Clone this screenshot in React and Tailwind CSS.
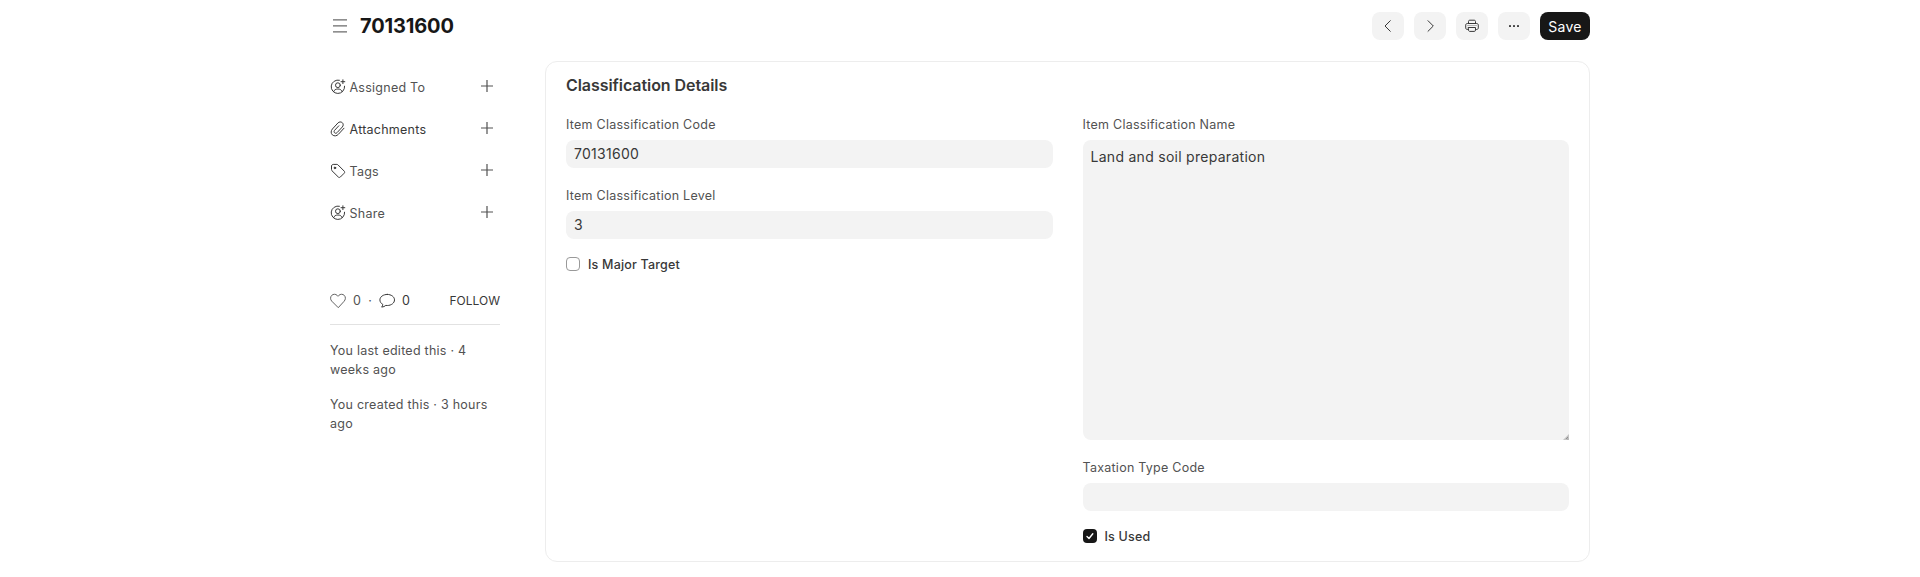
import React from "react";

const stroke = {
  fill: "none",
  stroke: "currentColor",
  strokeLinecap: "round",
  strokeLinejoin: "round",
};

function Menu() {
  return (
    <svg className="h-5 w-5" viewBox="0 0 20 20" stroke="#6b6b6b" strokeWidth="1.200">
      <path d="M3 3.800h14M3 9.800h14M3 15.800h14" />
    </svg>
  );
}

function UserPlus() {
  return (
    <svg className="h-4 w-4" viewBox="0 0 16 16" {...stroke}>
      <path d="M9.4 1.200A6.700 6.700 0 1 0 14.600 7.200" />
      <circle cx="7.900" cy="6.200" r="2.400" />
      <path d="M3.500 12.700c.7-1.800 2.200-2.700 4.400-2.700s3.700.9 4.400 2.700M12.900.8v3.800M11 2.700h3.800" />
    </svg>
  );
}

function Clip() {
  return (
    <svg className="h-4 w-4" viewBox="0 0 16 16" {...stroke}>
      <path d="M14 7.200l-5.600 6.100c-1.600 1.800-4.300 2.100-6 .6s-1.600-4.100 0-5.900l5.500-6c1.200-1.300 3.200-1.400 4.400-.3s1.200 3 0 4.300l-5.200 5.600c-.7.8-1.800.9-2.500.2s-.7-1.700 0-2.500l4.200-4.500" />
    </svg>
  );
}

function Tag() {
  return (
    <svg className="h-4 w-4" viewBox="0 0 16 16" {...stroke}>
      <path d="M1.500 3.200v3.400c0 .5.200.9.500 1.200l6.300 6.200c.6.600 1.500.6 2.100 0l3.800-3.800c.6-.6.6-1.500 0-2.100L8 1.900c-.3-.3-.7-.5-1.100-.5H3.200c-.9 0-1.700.8-1.700 1.800z" />
      <circle cx="4.900" cy="4.900" r=".8" fill="currentColor" />
    </svg>
  );
}

function Plus() {
  return (
    <svg className="mb-1 h-3 w-3 text-[#525252]" viewBox="0 0 12 12" {...stroke} strokeLinecap="butt" strokeWidth="1.200">
      <path d="M6 0v12M0 6h12" />
    </svg>
  );
}

function Heart() {
  return (
    <svg className="h-4 w-4" viewBox="0 0 16 16" {...stroke} strokeWidth=".9">
      <path d="M8 14.400L1.800 8.200C.2 6.600.2 3.900 1.700 2.400s4-1.500 5.500 0L8 3.300l.8-.9c1.500-1.500 4-1.500 5.500 0s1.500 4.200-.1 5.800z" />
    </svg>
  );
}

function Comment() {
  return (
    <svg className="h-4 w-4" viewBox="0 0 16 16" {...stroke}>
      <path d="M8.300 1.400C4.200 1.400.9 3.800.9 6.900c0 1.900 1.100 3.500 2.900 4.500-.1 1-.5 1.900-1.100 2.700 1.600-.1 3-.7 4.100-1.700.5.1.9.1 1.500.1 4 0 7.200-2.500 7.200-5.600s-3.200-5.500-7.200-5.500z" />
    </svg>
  );
}

function ChevronLeft() {
  return (
    <svg className="h-4 w-4" viewBox="0 0 16 16" {...stroke}>
      <path d="M10.300 2.700L5 8l5.300 5.300" />
    </svg>
  );
}

function ChevronRight() {
  return (
    <svg className="h-4 w-4" viewBox="0 0 16 16" {...stroke}>
      <path d="M6 2.700l5.300 5.300L6 13.300" />
    </svg>
  );
}

function Printer() {
  return (
    <svg className="h-4 w-4" viewBox="0 0 16 16" {...stroke}>
      <path d="M4.500 5.500V3.500c0-.8.500-1.300 1.200-1.300h4.600c.7 0 1.200.5 1.200 1.300v2" />
      <path d="M4.500 11.500H3.300c-.9 0-1.600-.7-1.600-1.600V7.100c0-.9.700-1.600 1.600-1.600h9.400c.9 0 1.600.7 1.600 1.600v2.800c0 .9-.7 1.600-1.600 1.600h-1.200" />
      <path d="M4.500 9.500h7v2.700c0 .7-.5 1.200-1.200 1.200H5.700c-.7 0-1.200-.5-1.200-1.200z" />
      <path d="M3.500 7.500h9" opacity=".35" />
    </svg>
  );
}

function Dots() {
  return (
    <svg className="h-4 w-4" viewBox="0 0 16 16" fill="currentColor">
      <rect x="3" y="7" width="2" height="2" rx=".4" />
      <rect x="7" y="7" width="2" height="2" rx=".4" />
      <rect x="11" y="7" width="2" height="2" rx=".4" />
    </svg>
  );
}

function ResizeGrip() {
  return (
    <svg className="pointer-events-none absolute bottom-0 right-0 h-1.5 w-1.5" viewBox="0 0 6 6">
      <path d="M6 0v6H0z" fill="#c4c4c4" />
      <path d="M3 5L5 3M4.500 5h.8" stroke="#808080" strokeWidth=".8" />
    </svg>
  );
}

function SidebarRow({ icon, label, dark }) {
  return (
    <div className="flex h-[42px] items-center justify-between pr-[7px]">
      <div className="flex items-center gap-[3.5px]">
        <span className="mb-0.5 text-[#383838]">{icon}</span>
        <span className={dark ? "text-[#383838]" : "text-[#525252]"}>{label}</span>
      </div>
      <Plus />
    </div>
  );
}

function IconButton({ children, label }) {
  return (
    <button aria-label={label} className="flex h-7 w-8 items-center justify-center rounded-lg bg-[#f3f3f3] text-[#383838]">
      {children}
    </button>
  );
}

function Field({ label, value }) {
  return (
    <label className="block">
      <span className="block h-5 leading-[21px] text-[#525252]">{label}</span>
      <input
        type="text"
        defaultValue={value}
        className="mt-1.5 block h-7 w-full rounded-lg bg-[#f3f3f3] px-2 pb-0.5 text-sm tracking-[0.02em] text-[#383838] outline-none"
      />
    </label>
  );
}

function Check({ label, checked }) {
  return (
    <div className="flex h-5 items-center gap-2 font-medium tracking-[0.015em] text-[#383838]">
      {checked ? (
        <span className="flex h-3.5 w-3.5 items-center justify-center rounded bg-[#171717]">
          <svg className="h-3.5 w-3.5" viewBox="0 0 14 14" fill="none" stroke="white" strokeWidth="1.400" strokeLinecap="round" strokeLinejoin="round">
            <path d="M4 7.600l2 1.900 3.800-4.700" />
          </svg>
        </span>
      ) : (
        <span className="h-3.5 w-3.5 rounded border border-[#999999] bg-white" />
      )}
      <span className="pt-0.5">{label}</span>
    </div>
  );
}

export default function App() {
  return (
    <div className="h-[577px] overflow-hidden bg-white font-['Inter',sans-serif] text-[12.5px] tracking-[0.02em]">
      <div className="mx-auto w-[1260px]">
        <header className="flex h-[61px] items-start justify-between pt-3">
          <div className="flex h-7 items-center gap-2.5">
            <Menu />
            <h1 className="text-xl font-bold tracking-[-0.0075em] text-[#171717]">70131600</h1>
          </div>
          <div className="flex gap-2.5">
            <IconButton label="Previous"><ChevronLeft /></IconButton>
            <IconButton label="Next"><ChevronRight /></IconButton>
            <IconButton label="Print"><Printer /></IconButton>
            <IconButton label="More"><Dots /></IconButton>
            <button className="h-7 w-[50px] rounded-lg bg-[#171717] pt-px text-sm tracking-[0.02em] text-white">Save</button>
          </div>
        </header>

        <div className="flex gap-[45px]">
          <aside className="w-[170px] pt-1.5">
            <SidebarRow icon={<UserPlus />} label="Assigned To" />
            <SidebarRow icon={<Clip />} label="Attachments" dark />
            <SidebarRow icon={<Tag />} label="Tags" />
            <SidebarRow icon={<UserPlus />} label="Share" />
            <div className="mt-[56px] flex h-[34px] items-start justify-between border-b border-[#e2e2e2] text-[#525252]">
              <div className="flex h-5 items-center">
                <Heart />
                <span className="ml-[7px]">0</span>
                <span className="mx-[7px]">·</span>
                <span className="text-[#383838]"><Comment /></span>
                <span className="ml-[7px] text-[#383838]">0</span>
              </div>
              <span className="text-xs leading-5 tracking-normal text-[#383838]">FOLLOW</span>
            </div>
            <p className="mt-4 leading-[19px] text-[#525252]">You last edited this · 4 weeks ago</p>
            <p className="mt-4 leading-[19px] text-[#525252]">You created this · 3 hours ago</p>
          </aside>

          <main className="h-[501px] w-[1045px] rounded-xl border border-[#ededed] px-5 pt-[11px]">
            <h2 className="h-6 text-base font-semibold leading-6 tracking-[-0.004em] text-[#383838]">Classification Details</h2>
            <div className="mt-[17px] grid grid-cols-2 gap-x-[30px]">
              <div>
                <Field label="Item Classification Code" value="70131600" />
                <div className="mt-[17px]"><Field label="Item Classification Level" value="3" /></div>
                <div className="mt-[15px]"><Check label="Is Major Target" /></div>
              </div>
              <div>
                <label className="relative block">
                  <span className="block h-5 leading-[21px] text-[#525252]">Item Classification Name</span>
                  <textarea
                    defaultValue="Land and soil preparation"
                    className="mt-1.5 block h-[300px] w-full resize-none rounded-lg rounded-br-none bg-[#f3f3f3] px-2 py-1.5 text-sm leading-[21px] tracking-[0.02em] text-[#383838] outline-none"
                  />
                  <ResizeGrip />
                </label>
                <div className="mt-[17px]"><Field label="Taxation Type Code" value="" /></div>
                <div className="mt-[15px]"><Check label="Is Used" checked /></div>
              </div>
            </div>
          </main>
        </div>
      </div>
    </div>
  );
}
